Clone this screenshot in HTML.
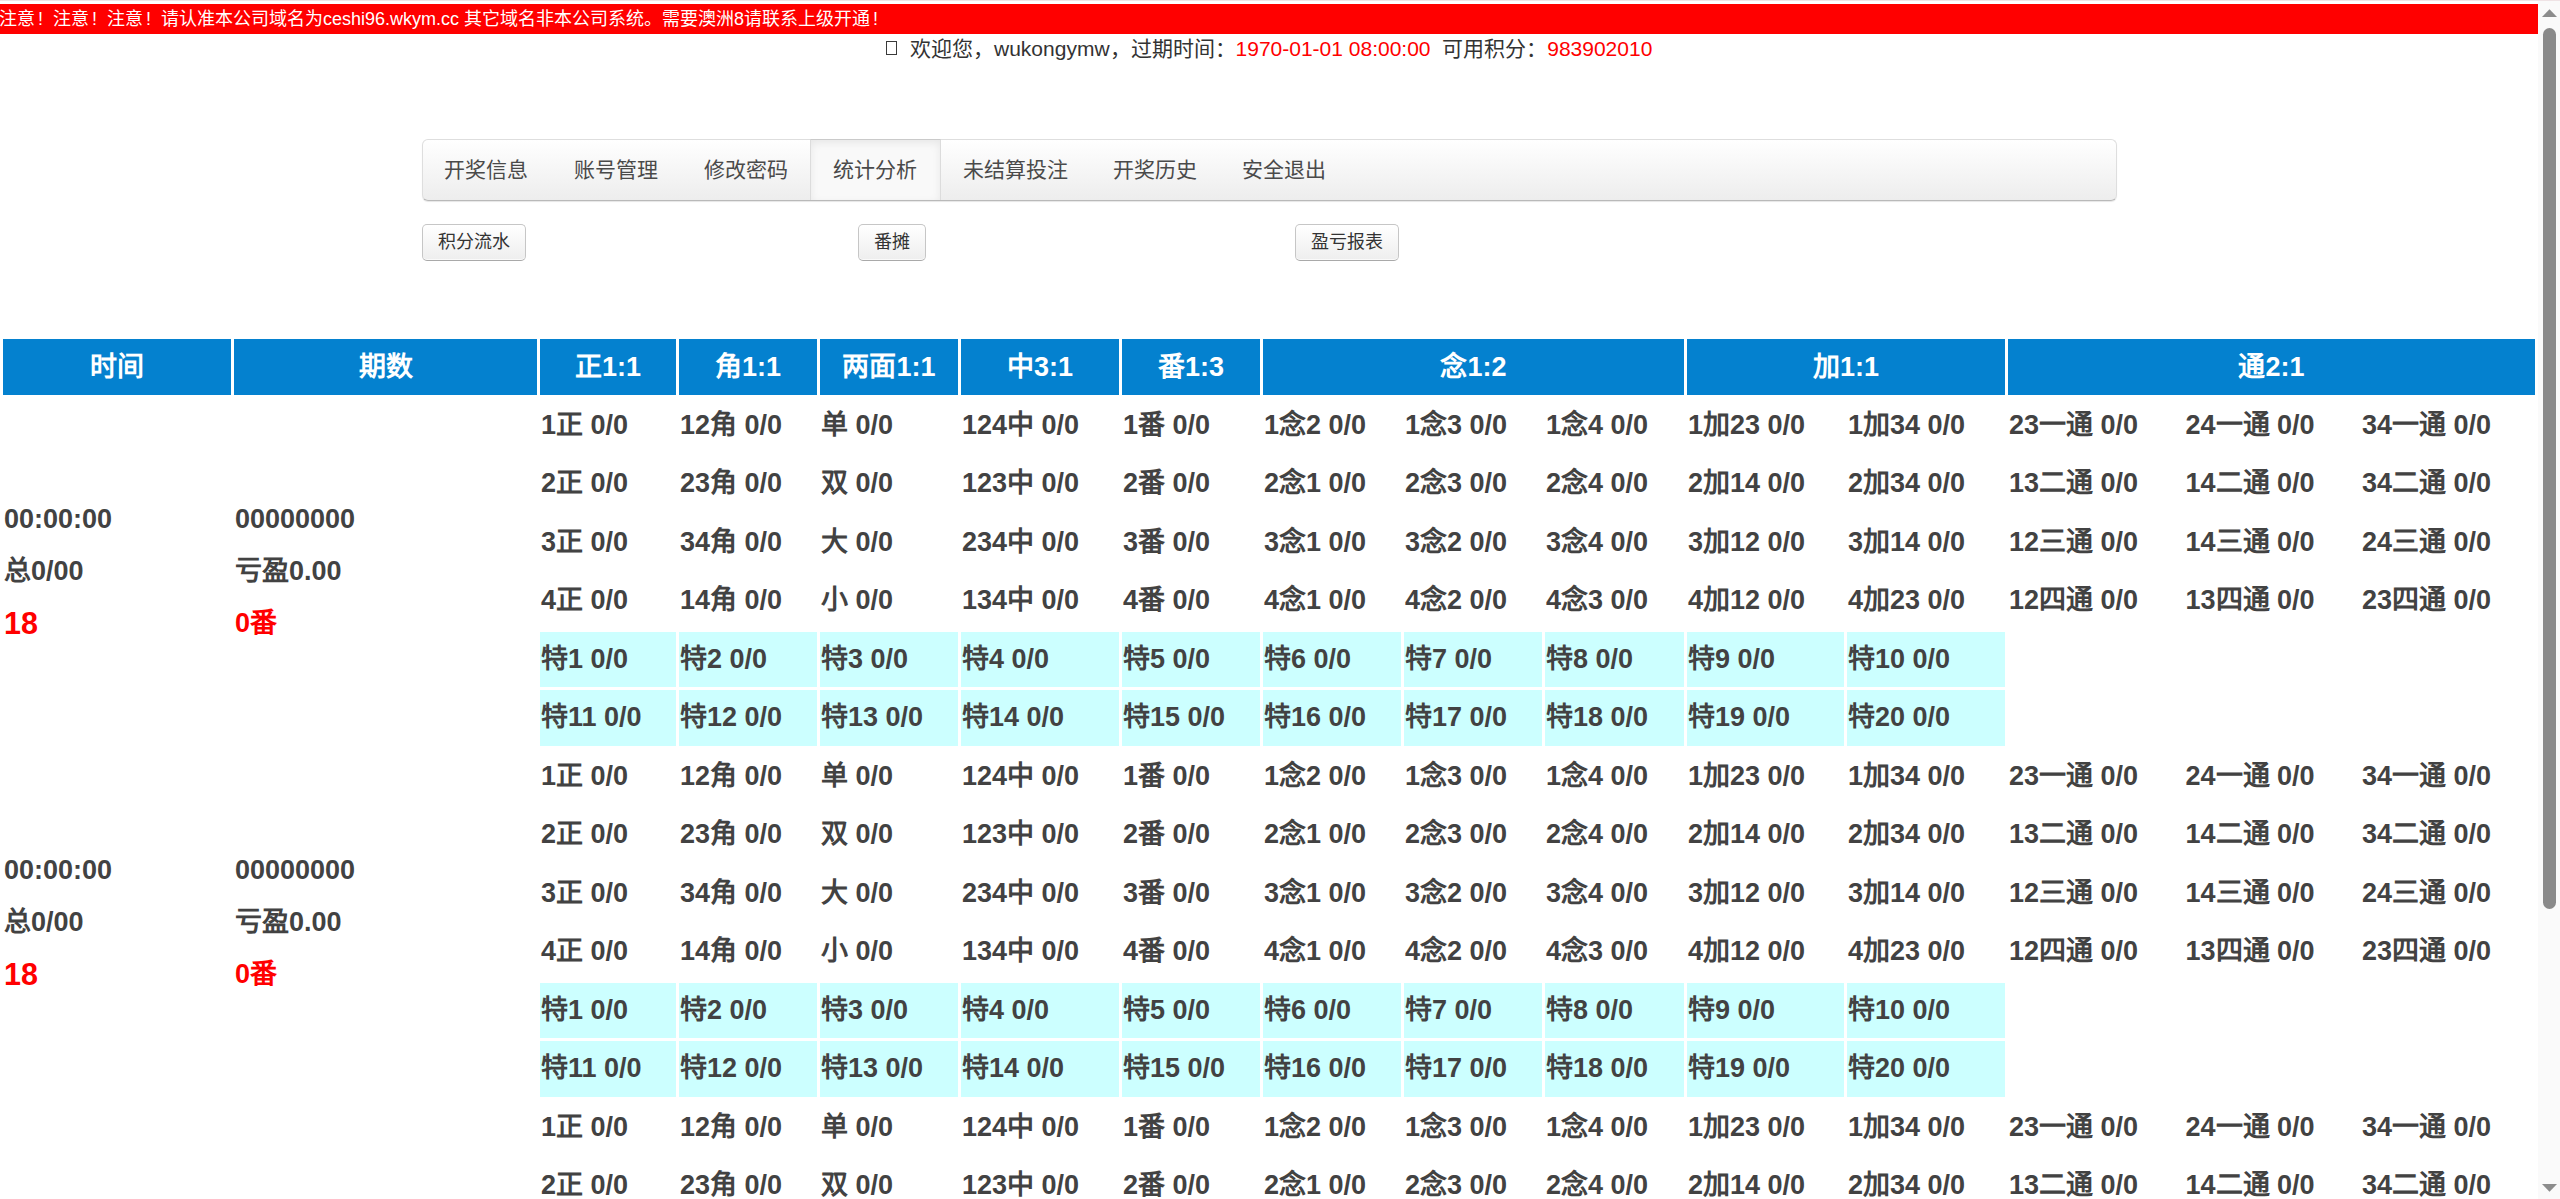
<!DOCTYPE html><html lang="zh-CN"><head><meta charset="utf-8"><title>统计分析</title><style>
html,body{margin:0;padding:0;background:#fff;overflow:hidden;width:2560px;height:1199px;}
body{position:relative;font-family:"Liberation Sans",sans-serif;}
.a{position:absolute;white-space:nowrap;}
#topline{left:0;top:0;width:2560px;z-index:5;height:1px;background:#efe3e5;}
#marq{left:0;top:4px;width:2538px;height:30px;background:#ff0000;overflow:hidden;}
.fw{font-style:normal;display:inline-block;width:18px;padding-left:3px;box-sizing:border-box;}
#marq span{position:absolute;left:-1px;top:0;line-height:30px;font-size:18px;color:#fff;}
#wbox{left:886px;top:41px;width:9px;height:12px;border:1.6px solid #3a3a3a;}
#welcome{left:910px;top:33.5px;font-size:21px;line-height:30px;color:#333;}
#welcome .r{color:#ff0000;}
#nav{left:422px;top:139px;width:1693px;height:60px;border:1px solid #dedede;border-bottom-color:#b9b9b9;border-radius:6px;
 background:linear-gradient(to bottom,#ffffff 0%,#ededed 100%);box-shadow:0 1px 1px rgba(0,0,0,.10);}
#navact{left:810px;top:139px;width:131px;height:61px;background:#f9f9f9;box-shadow:inset 0 3px 9px rgba(0,0,0,.075);border-left:1px solid #dcdcdc;border-right:1px solid #dcdcdc;border-top:1px solid #cacaca;box-sizing:border-box;}
.nv{font-size:21px;line-height:30px;color:#4a4a4a;top:155px;}
.btn{height:35px;border:1px solid #c6c6c6;border-bottom-color:#a9a9a9;border-radius:5px;background:linear-gradient(to bottom,#ffffff 0%,#eeeeee 100%);box-shadow:inset 0 -1px 0 rgba(255,255,255,.7);font-size:18px;line-height:35.5px;color:#333;text-align:center;box-sizing:content-box;}
.hc{background:#0481cf;color:#fff;font-weight:bold;font-size:27px;text-align:center;line-height:56px;height:56px;top:339px;}
.c{font-weight:bold;font-size:27px;color:#424242;height:55.5px;line-height:55.5px;padding-left:1px;box-sizing:border-box;}
.cy{background:#ccffff;}
.lc{font-weight:bold;font-size:27px;color:#424242;line-height:52px;}
.red{color:#ff0000;}
.big{font-size:30.5px;}
#sb{left:2538px;top:0;width:22px;height:1199px;background:#fafafa;}
#thumb{left:2543px;top:28px;width:13px;height:880.5px;background:#8a8a8a;border-radius:6.5px;}
</style></head><body>
<div class="a" id="topline"></div>
<div class="a" id="marq"><span>注意<i class="fw">!</i>注意<i class="fw">!</i>注意<i class="fw">!</i>请认准本公司域名为ceshi96.wkym.cc 其它域名非本公司系统。需要澳洲8请联系上级开通<i class="fw">!</i></span></div>
<div class="a" id="wbox"></div><div class="a" id="welcome">欢迎您，wukongymw，过期时间：<span class="r">1970-01-01 08:00:00</span>&nbsp; 可用积分：<span class="r">983902010</span></div>
<div class="a" id="nav"></div><div class="a" id="navact"></div>
<div class="a nv" style="left:444px">开奖信息</div>
<div class="a nv" style="left:574px">账号管理</div>
<div class="a nv" style="left:704px">修改密码</div>
<div class="a nv" style="left:832.5px">统计分析</div>
<div class="a nv" style="left:962.5px">未结算投注</div>
<div class="a nv" style="left:1112.5px">开奖历史</div>
<div class="a nv" style="left:1241.5px">安全退出</div>
<div class="a btn" style="left:422px;top:224px;width:102px">积分流水</div>
<div class="a btn" style="left:858px;top:224px;width:66px">番摊</div>
<div class="a btn" style="left:1295px;top:224px;width:102px">盈亏报表</div>
<div class="a hc" style="left:3px;width:228px">时间</div>
<div class="a hc" style="left:234px;width:303px">期数</div>
<div class="a hc" style="left:540px;width:136px">正1:1</div>
<div class="a hc" style="left:679px;width:138px">角1:1</div>
<div class="a hc" style="left:820px;width:138px">两面1:1</div>
<div class="a hc" style="left:961px;width:158px">中3:1</div>
<div class="a hc" style="left:1122px;width:138px">番1:3</div>
<div class="a hc" style="left:1263px;width:421px">念1:2</div>
<div class="a hc" style="left:1687px;width:318px">加1:1</div>
<div class="a hc" style="left:2008px;width:527px">通2:1</div>
<div class="a c" style="left:540px;top:397.75px;width:136px">1正 0/0</div>
<div class="a c" style="left:679px;top:397.75px;width:138px">12角 0/0</div>
<div class="a c" style="left:820px;top:397.75px;width:138px">单 0/0</div>
<div class="a c" style="left:961px;top:397.75px;width:158px">124中 0/0</div>
<div class="a c" style="left:1122px;top:397.75px;width:138px">1番 0/0</div>
<div class="a c" style="left:1263px;top:397.75px;width:138px">1念2 0/0</div>
<div class="a c" style="left:1404px;top:397.75px;width:138px">1念3 0/0</div>
<div class="a c" style="left:1545px;top:397.75px;width:139px">1念4 0/0</div>
<div class="a c" style="left:1687px;top:397.75px;width:157px">1加23 0/0</div>
<div class="a c" style="left:1847px;top:397.75px;width:158px">1加34 0/0</div>
<div class="a c" style="left:2008px;top:397.75px;width:173.5px">23一通 0/0</div>
<div class="a c" style="left:2184.5px;top:397.75px;width:173.5px">24一通 0/0</div>
<div class="a c" style="left:2361px;top:397.75px;width:174px">34一通 0/0</div>
<div class="a c" style="left:540px;top:456.25px;width:136px">2正 0/0</div>
<div class="a c" style="left:679px;top:456.25px;width:138px">23角 0/0</div>
<div class="a c" style="left:820px;top:456.25px;width:138px">双 0/0</div>
<div class="a c" style="left:961px;top:456.25px;width:158px">123中 0/0</div>
<div class="a c" style="left:1122px;top:456.25px;width:138px">2番 0/0</div>
<div class="a c" style="left:1263px;top:456.25px;width:138px">2念1 0/0</div>
<div class="a c" style="left:1404px;top:456.25px;width:138px">2念3 0/0</div>
<div class="a c" style="left:1545px;top:456.25px;width:139px">2念4 0/0</div>
<div class="a c" style="left:1687px;top:456.25px;width:157px">2加14 0/0</div>
<div class="a c" style="left:1847px;top:456.25px;width:158px">2加34 0/0</div>
<div class="a c" style="left:2008px;top:456.25px;width:173.5px">13二通 0/0</div>
<div class="a c" style="left:2184.5px;top:456.25px;width:173.5px">14二通 0/0</div>
<div class="a c" style="left:2361px;top:456.25px;width:174px">34二通 0/0</div>
<div class="a c" style="left:540px;top:514.75px;width:136px">3正 0/0</div>
<div class="a c" style="left:679px;top:514.75px;width:138px">34角 0/0</div>
<div class="a c" style="left:820px;top:514.75px;width:138px">大 0/0</div>
<div class="a c" style="left:961px;top:514.75px;width:158px">234中 0/0</div>
<div class="a c" style="left:1122px;top:514.75px;width:138px">3番 0/0</div>
<div class="a c" style="left:1263px;top:514.75px;width:138px">3念1 0/0</div>
<div class="a c" style="left:1404px;top:514.75px;width:138px">3念2 0/0</div>
<div class="a c" style="left:1545px;top:514.75px;width:139px">3念4 0/0</div>
<div class="a c" style="left:1687px;top:514.75px;width:157px">3加12 0/0</div>
<div class="a c" style="left:1847px;top:514.75px;width:158px">3加14 0/0</div>
<div class="a c" style="left:2008px;top:514.75px;width:173.5px">12三通 0/0</div>
<div class="a c" style="left:2184.5px;top:514.75px;width:173.5px">14三通 0/0</div>
<div class="a c" style="left:2361px;top:514.75px;width:174px">24三通 0/0</div>
<div class="a c" style="left:540px;top:573.25px;width:136px">4正 0/0</div>
<div class="a c" style="left:679px;top:573.25px;width:138px">14角 0/0</div>
<div class="a c" style="left:820px;top:573.25px;width:138px">小 0/0</div>
<div class="a c" style="left:961px;top:573.25px;width:158px">134中 0/0</div>
<div class="a c" style="left:1122px;top:573.25px;width:138px">4番 0/0</div>
<div class="a c" style="left:1263px;top:573.25px;width:138px">4念1 0/0</div>
<div class="a c" style="left:1404px;top:573.25px;width:138px">4念2 0/0</div>
<div class="a c" style="left:1545px;top:573.25px;width:139px">4念3 0/0</div>
<div class="a c" style="left:1687px;top:573.25px;width:157px">4加12 0/0</div>
<div class="a c" style="left:1847px;top:573.25px;width:158px">4加23 0/0</div>
<div class="a c" style="left:2008px;top:573.25px;width:173.5px">12四通 0/0</div>
<div class="a c" style="left:2184.5px;top:573.25px;width:173.5px">13四通 0/0</div>
<div class="a c" style="left:2361px;top:573.25px;width:174px">23四通 0/0</div>
<div class="a c cy" style="left:540px;top:631.75px;width:136px">特1 0/0</div>
<div class="a c cy" style="left:679px;top:631.75px;width:138px">特2 0/0</div>
<div class="a c cy" style="left:820px;top:631.75px;width:138px">特3 0/0</div>
<div class="a c cy" style="left:961px;top:631.75px;width:158px">特4 0/0</div>
<div class="a c cy" style="left:1122px;top:631.75px;width:138px">特5 0/0</div>
<div class="a c cy" style="left:1263px;top:631.75px;width:138px">特6 0/0</div>
<div class="a c cy" style="left:1404px;top:631.75px;width:138px">特7 0/0</div>
<div class="a c cy" style="left:1545px;top:631.75px;width:139px">特8 0/0</div>
<div class="a c cy" style="left:1687px;top:631.75px;width:157px">特9 0/0</div>
<div class="a c cy" style="left:1847px;top:631.75px;width:158px">特10 0/0</div>
<div class="a c cy" style="left:540px;top:690.25px;width:136px">特11 0/0</div>
<div class="a c cy" style="left:679px;top:690.25px;width:138px">特12 0/0</div>
<div class="a c cy" style="left:820px;top:690.25px;width:138px">特13 0/0</div>
<div class="a c cy" style="left:961px;top:690.25px;width:158px">特14 0/0</div>
<div class="a c cy" style="left:1122px;top:690.25px;width:138px">特15 0/0</div>
<div class="a c cy" style="left:1263px;top:690.25px;width:138px">特16 0/0</div>
<div class="a c cy" style="left:1404px;top:690.25px;width:138px">特17 0/0</div>
<div class="a c cy" style="left:1545px;top:690.25px;width:139px">特18 0/0</div>
<div class="a c cy" style="left:1687px;top:690.25px;width:157px">特19 0/0</div>
<div class="a c cy" style="left:1847px;top:690.25px;width:158px">特20 0/0</div>
<div class="a lc" style="left:4px;top:493.0px">00:00:00</div>
<div class="a lc" style="left:4px;top:545.0px">总0/00</div>
<div class="a lc red big" style="left:4px;top:597.0px">18</div>
<div class="a lc" style="left:235px;top:493.0px">00000000</div>
<div class="a lc" style="left:235px;top:545.0px">亏盈0.00</div>
<div class="a lc red" style="left:235px;top:597.0px">0番</div>
<div class="a c" style="left:540px;top:748.75px;width:136px">1正 0/0</div>
<div class="a c" style="left:679px;top:748.75px;width:138px">12角 0/0</div>
<div class="a c" style="left:820px;top:748.75px;width:138px">单 0/0</div>
<div class="a c" style="left:961px;top:748.75px;width:158px">124中 0/0</div>
<div class="a c" style="left:1122px;top:748.75px;width:138px">1番 0/0</div>
<div class="a c" style="left:1263px;top:748.75px;width:138px">1念2 0/0</div>
<div class="a c" style="left:1404px;top:748.75px;width:138px">1念3 0/0</div>
<div class="a c" style="left:1545px;top:748.75px;width:139px">1念4 0/0</div>
<div class="a c" style="left:1687px;top:748.75px;width:157px">1加23 0/0</div>
<div class="a c" style="left:1847px;top:748.75px;width:158px">1加34 0/0</div>
<div class="a c" style="left:2008px;top:748.75px;width:173.5px">23一通 0/0</div>
<div class="a c" style="left:2184.5px;top:748.75px;width:173.5px">24一通 0/0</div>
<div class="a c" style="left:2361px;top:748.75px;width:174px">34一通 0/0</div>
<div class="a c" style="left:540px;top:807.25px;width:136px">2正 0/0</div>
<div class="a c" style="left:679px;top:807.25px;width:138px">23角 0/0</div>
<div class="a c" style="left:820px;top:807.25px;width:138px">双 0/0</div>
<div class="a c" style="left:961px;top:807.25px;width:158px">123中 0/0</div>
<div class="a c" style="left:1122px;top:807.25px;width:138px">2番 0/0</div>
<div class="a c" style="left:1263px;top:807.25px;width:138px">2念1 0/0</div>
<div class="a c" style="left:1404px;top:807.25px;width:138px">2念3 0/0</div>
<div class="a c" style="left:1545px;top:807.25px;width:139px">2念4 0/0</div>
<div class="a c" style="left:1687px;top:807.25px;width:157px">2加14 0/0</div>
<div class="a c" style="left:1847px;top:807.25px;width:158px">2加34 0/0</div>
<div class="a c" style="left:2008px;top:807.25px;width:173.5px">13二通 0/0</div>
<div class="a c" style="left:2184.5px;top:807.25px;width:173.5px">14二通 0/0</div>
<div class="a c" style="left:2361px;top:807.25px;width:174px">34二通 0/0</div>
<div class="a c" style="left:540px;top:865.75px;width:136px">3正 0/0</div>
<div class="a c" style="left:679px;top:865.75px;width:138px">34角 0/0</div>
<div class="a c" style="left:820px;top:865.75px;width:138px">大 0/0</div>
<div class="a c" style="left:961px;top:865.75px;width:158px">234中 0/0</div>
<div class="a c" style="left:1122px;top:865.75px;width:138px">3番 0/0</div>
<div class="a c" style="left:1263px;top:865.75px;width:138px">3念1 0/0</div>
<div class="a c" style="left:1404px;top:865.75px;width:138px">3念2 0/0</div>
<div class="a c" style="left:1545px;top:865.75px;width:139px">3念4 0/0</div>
<div class="a c" style="left:1687px;top:865.75px;width:157px">3加12 0/0</div>
<div class="a c" style="left:1847px;top:865.75px;width:158px">3加14 0/0</div>
<div class="a c" style="left:2008px;top:865.75px;width:173.5px">12三通 0/0</div>
<div class="a c" style="left:2184.5px;top:865.75px;width:173.5px">14三通 0/0</div>
<div class="a c" style="left:2361px;top:865.75px;width:174px">24三通 0/0</div>
<div class="a c" style="left:540px;top:924.25px;width:136px">4正 0/0</div>
<div class="a c" style="left:679px;top:924.25px;width:138px">14角 0/0</div>
<div class="a c" style="left:820px;top:924.25px;width:138px">小 0/0</div>
<div class="a c" style="left:961px;top:924.25px;width:158px">134中 0/0</div>
<div class="a c" style="left:1122px;top:924.25px;width:138px">4番 0/0</div>
<div class="a c" style="left:1263px;top:924.25px;width:138px">4念1 0/0</div>
<div class="a c" style="left:1404px;top:924.25px;width:138px">4念2 0/0</div>
<div class="a c" style="left:1545px;top:924.25px;width:139px">4念3 0/0</div>
<div class="a c" style="left:1687px;top:924.25px;width:157px">4加12 0/0</div>
<div class="a c" style="left:1847px;top:924.25px;width:158px">4加23 0/0</div>
<div class="a c" style="left:2008px;top:924.25px;width:173.5px">12四通 0/0</div>
<div class="a c" style="left:2184.5px;top:924.25px;width:173.5px">13四通 0/0</div>
<div class="a c" style="left:2361px;top:924.25px;width:174px">23四通 0/0</div>
<div class="a c cy" style="left:540px;top:982.75px;width:136px">特1 0/0</div>
<div class="a c cy" style="left:679px;top:982.75px;width:138px">特2 0/0</div>
<div class="a c cy" style="left:820px;top:982.75px;width:138px">特3 0/0</div>
<div class="a c cy" style="left:961px;top:982.75px;width:158px">特4 0/0</div>
<div class="a c cy" style="left:1122px;top:982.75px;width:138px">特5 0/0</div>
<div class="a c cy" style="left:1263px;top:982.75px;width:138px">特6 0/0</div>
<div class="a c cy" style="left:1404px;top:982.75px;width:138px">特7 0/0</div>
<div class="a c cy" style="left:1545px;top:982.75px;width:139px">特8 0/0</div>
<div class="a c cy" style="left:1687px;top:982.75px;width:157px">特9 0/0</div>
<div class="a c cy" style="left:1847px;top:982.75px;width:158px">特10 0/0</div>
<div class="a c cy" style="left:540px;top:1041.25px;width:136px">特11 0/0</div>
<div class="a c cy" style="left:679px;top:1041.25px;width:138px">特12 0/0</div>
<div class="a c cy" style="left:820px;top:1041.25px;width:138px">特13 0/0</div>
<div class="a c cy" style="left:961px;top:1041.25px;width:158px">特14 0/0</div>
<div class="a c cy" style="left:1122px;top:1041.25px;width:138px">特15 0/0</div>
<div class="a c cy" style="left:1263px;top:1041.25px;width:138px">特16 0/0</div>
<div class="a c cy" style="left:1404px;top:1041.25px;width:138px">特17 0/0</div>
<div class="a c cy" style="left:1545px;top:1041.25px;width:139px">特18 0/0</div>
<div class="a c cy" style="left:1687px;top:1041.25px;width:157px">特19 0/0</div>
<div class="a c cy" style="left:1847px;top:1041.25px;width:158px">特20 0/0</div>
<div class="a lc" style="left:4px;top:844.0px">00:00:00</div>
<div class="a lc" style="left:4px;top:896.0px">总0/00</div>
<div class="a lc red big" style="left:4px;top:948.0px">18</div>
<div class="a lc" style="left:235px;top:844.0px">00000000</div>
<div class="a lc" style="left:235px;top:896.0px">亏盈0.00</div>
<div class="a lc red" style="left:235px;top:948.0px">0番</div>
<div class="a c" style="left:540px;top:1099.75px;width:136px">1正 0/0</div>
<div class="a c" style="left:679px;top:1099.75px;width:138px">12角 0/0</div>
<div class="a c" style="left:820px;top:1099.75px;width:138px">单 0/0</div>
<div class="a c" style="left:961px;top:1099.75px;width:158px">124中 0/0</div>
<div class="a c" style="left:1122px;top:1099.75px;width:138px">1番 0/0</div>
<div class="a c" style="left:1263px;top:1099.75px;width:138px">1念2 0/0</div>
<div class="a c" style="left:1404px;top:1099.75px;width:138px">1念3 0/0</div>
<div class="a c" style="left:1545px;top:1099.75px;width:139px">1念4 0/0</div>
<div class="a c" style="left:1687px;top:1099.75px;width:157px">1加23 0/0</div>
<div class="a c" style="left:1847px;top:1099.75px;width:158px">1加34 0/0</div>
<div class="a c" style="left:2008px;top:1099.75px;width:173.5px">23一通 0/0</div>
<div class="a c" style="left:2184.5px;top:1099.75px;width:173.5px">24一通 0/0</div>
<div class="a c" style="left:2361px;top:1099.75px;width:174px">34一通 0/0</div>
<div class="a c" style="left:540px;top:1158.25px;width:136px">2正 0/0</div>
<div class="a c" style="left:679px;top:1158.25px;width:138px">23角 0/0</div>
<div class="a c" style="left:820px;top:1158.25px;width:138px">双 0/0</div>
<div class="a c" style="left:961px;top:1158.25px;width:158px">123中 0/0</div>
<div class="a c" style="left:1122px;top:1158.25px;width:138px">2番 0/0</div>
<div class="a c" style="left:1263px;top:1158.25px;width:138px">2念1 0/0</div>
<div class="a c" style="left:1404px;top:1158.25px;width:138px">2念3 0/0</div>
<div class="a c" style="left:1545px;top:1158.25px;width:139px">2念4 0/0</div>
<div class="a c" style="left:1687px;top:1158.25px;width:157px">2加14 0/0</div>
<div class="a c" style="left:1847px;top:1158.25px;width:158px">2加34 0/0</div>
<div class="a c" style="left:2008px;top:1158.25px;width:173.5px">13二通 0/0</div>
<div class="a c" style="left:2184.5px;top:1158.25px;width:173.5px">14二通 0/0</div>
<div class="a c" style="left:2361px;top:1158.25px;width:174px">34二通 0/0</div>
<div class="a lc" style="left:4px;top:1195.0px">00:00:00</div>
<div class="a lc" style="left:4px;top:1247.0px">总0/00</div>
<div class="a lc red big" style="left:4px;top:1299.0px">18</div>
<div class="a lc" style="left:235px;top:1195.0px">00000000</div>
<div class="a lc" style="left:235px;top:1247.0px">亏盈0.00</div>
<div class="a lc red" style="left:235px;top:1299.0px">0番</div>
<div class="a" id="sb"></div><div class="a" id="thumb"></div>
<svg class="a" style="left:2540px;top:8px" width="20" height="12"><polygon points="2,9 9.5,1.2 17,9" fill="#8c8c8c"/></svg>
<svg class="a" style="left:2540px;top:1182px" width="20" height="12"><polygon points="2,2 17,2 9.5,9.8" fill="#8c8c8c"/></svg>
</body></html>
